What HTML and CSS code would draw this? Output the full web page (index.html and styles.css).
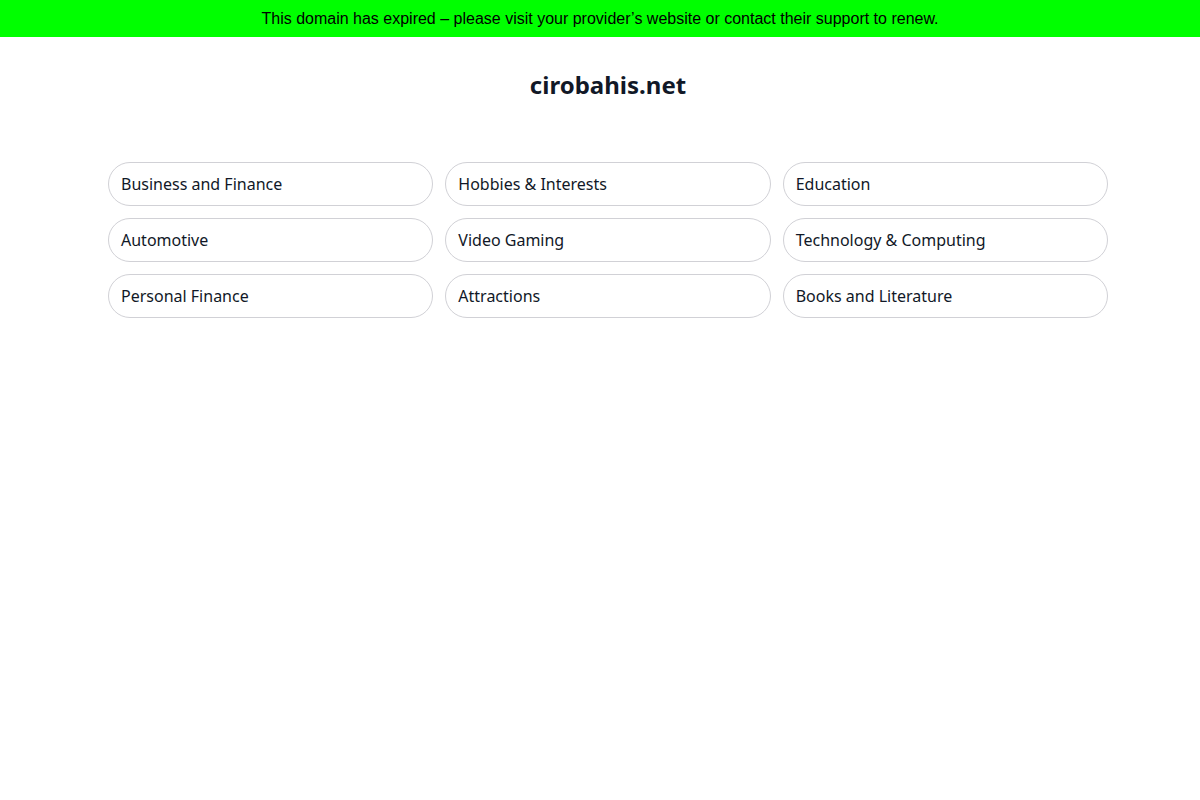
FILE: index.html
```html
<!DOCTYPE html>
<html lang="en">
<head>
<meta charset="utf-8">
<title>cirobahis.net</title>
<link rel="stylesheet" href="styles.css">
</head>
<body>
<div class="banner">This domain has expired – please visit your provider’s website or contact their support to renew.</div>
<div class="page">
  <main class="main">
    <h1 class="title">cirobahis.net</h1>
    <div class="grid">
      <a class="pill" href="#">Business and Finance</a>
      <a class="pill" href="#">Hobbies &amp; Interests</a>
      <a class="pill" href="#">Education</a>
      <a class="pill" href="#">Automotive</a>
      <a class="pill" href="#">Video Gaming</a>
      <a class="pill" href="#">Technology &amp; Computing</a>
      <a class="pill" href="#">Personal Finance</a>
      <a class="pill" href="#">Attractions</a>
      <a class="pill" href="#">Books and Literature</a>
    </div>
  </main>
</div>
</body>
</html>
```
FILE: styles.css
```css
html, body { margin: 0; padding: 0; background: #fff; }
body { font-family: "Noto Sans", sans-serif; color: #111827; }
.banner {
  background: #00ff00;
  color: #000;
  font-family: "Liberation Sans", Arial, sans-serif;
  font-size: 16px;
  height: 37px;
  line-height: 37px;
  text-align: center;
}
.page { padding-left: 16px; }
.main { width: 1000px; margin: 0 auto; }
.title {
  margin: 31px 0 0;
  font-size: 24px;
  line-height: 33px;
  font-weight: 700;
  text-align: center;
  color: #111827;
}
.grid {
  margin-top: 61px;
  display: grid;
  grid-template-columns: repeat(3, 1fr);
  gap: 12px;
}
.pill {
  display: flex;
  align-items: center;
  height: 44px;
  box-sizing: border-box;
  padding: 0 12px;
  border: 1px solid #d1d1d6;
  border-radius: 22px;
  font-size: 16px;
  color: #111827;
  text-decoration: none;
}
```
